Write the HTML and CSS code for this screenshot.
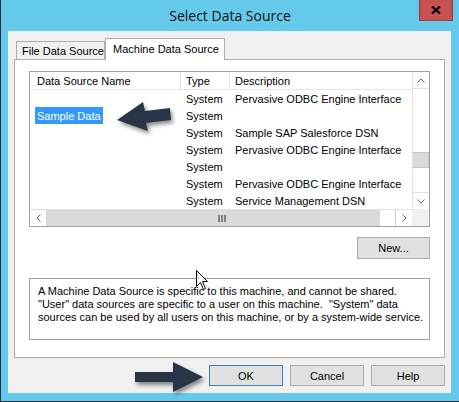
FILE: index.html
```html
<!DOCTYPE html>
<html lang="en">
<head>
    <meta charset="UTF-8">
    <title>Select Data Source</title>
    <link rel="stylesheet" href="styles.css">
</head>
<body>
    <div class="window">
        <div class="titlebar">
            <div></div>
            <div class="title">Select Data Source</div>
            <div class="close">
                <svg width="10" height="8" viewBox="0 0 10 8"><path d="M1 0.5 L9 7.5 M9 0.5 L1 7.5" stroke="#000" stroke-width="2.2" fill="none"/></svg>
            </div>
        </div>

        <div class="client">
            <div class="tabs">
                <div class="tab">File Data Source</div>
                <div class="tab active">Machine Data Source</div>
            </div>

            <div class="panel">
                <div class="listbox">
                    <div class="list-content">
                        <div class="row header">
                            <div class="cell name">Data Source Name</div>
                            <div class="cell">Type</div>
                            <div class="cell">Description</div>
                        </div>
                        <div class="row">
                            <div class="cell name"></div>
                            <div class="cell">System</div>
                            <div class="cell">Pervasive ODBC Engine Interface</div>
                        </div>
                        <div class="row">
                            <div class="cell name"><span class="selected">Sample Data</span></div>
                            <div class="cell">System</div>
                            <div class="cell"></div>
                        </div>
                        <div class="row">
                            <div class="cell name"></div>
                            <div class="cell">System</div>
                            <div class="cell">Sample SAP Salesforce DSN</div>
                        </div>
                        <div class="row">
                            <div class="cell name"></div>
                            <div class="cell">System</div>
                            <div class="cell">Pervasive ODBC Engine Interface</div>
                        </div>
                        <div class="row">
                            <div class="cell name"></div>
                            <div class="cell">System</div>
                            <div class="cell"></div>
                        </div>
                        <div class="row">
                            <div class="cell name"></div>
                            <div class="cell">System</div>
                            <div class="cell">Pervasive ODBC Engine Interface</div>
                        </div>
                        <div class="row">
                            <div class="cell name"></div>
                            <div class="cell">System</div>
                            <div class="cell">Service Management DSN</div>
                        </div>
                    </div>

                    <!-- vertical scrollbar -->
                    <div class="vscroll">
                        <div class="sb-btn up">
                            <svg width="8" height="5" viewBox="0 0 8 5"><path d="M0.5 4.5 L4 1 L7.5 4.5" stroke="#606060" fill="none"/></svg>
                        </div>
                        <div class="sb-track">
                            <div class="v-thumb"></div>
                        </div>
                        <div class="sb-btn down">
                            <svg width="8" height="5" viewBox="0 0 8 5"><path d="M0.5 0.5 L4 4 L7.5 0.5" stroke="#606060" fill="none"/></svg>
                        </div>
                    </div>

                    <!-- horizontal scrollbar -->
                    <div class="hscroll">
                        <div class="sb-btn left">
                            <svg width="5" height="8" viewBox="0 0 5 8"><path d="M4.5 0.5 L1 4 L4.5 7.5" stroke="#606060" fill="none"/></svg>
                        </div>
                        <div class="h-thumb">
                            <svg width="8" height="7" viewBox="0 0 8 7"><path d="M1 0 V7 M4 0 V7 M7 0 V7" stroke="#6a6a6a" stroke-width="1.6"/></svg>
                        </div>
                        <div class="sb-track"></div>
                        <div class="sb-btn right">
                            <svg width="5" height="8" viewBox="0 0 5 8"><path d="M0.5 0.5 L4 4 L0.5 7.5" stroke="#606060" fill="none"/></svg>
                        </div>
                    </div>
                    <div class="corner"></div>
                </div>

                <div class="new-row">
                    <button class="btn new">New...</button>
                </div>

                <div class="desc">A Machine Data Source is specific to this machine, and cannot be shared.
"User" data sources are specific to a user on this machine.  "System" data
sources can be used by all users on this machine, or by a system-wide service.</div>
            </div>

            <div class="buttons">
                <button class="btn default">OK</button>
                <button class="btn">Cancel</button>
                <button class="btn">Help</button>
            </div>
        </div>

        <!-- annotation arrows + mouse pointer drawn over the dialog -->
        <svg class="overlay" width="459" height="402" viewBox="0 0 459 402">
            <g class="arrows">
                <polygon points="117,120 143,102 145,111 170,108 171,120 146,123 148,131" />
                <polygon points="135,372 173,372 173,362 203,377 173,392 173,382 135,382" />
            </g>
            <path class="cursor" d="M196.5 270.5 V286.5 L200.5 282.5 L203.5 289.5 L205.5 288.5 L202.5 281.5 L207.5 281.5 Z" />
        </svg>
    </div>
</body>
</html>
```

FILE: styles.css
```css
body {
    margin: 0;
    font-family: "Liberation Sans", Arial, sans-serif;
    font-size: 11px;
    color: #000;
}
.window {
    position: relative;
    width: 458px;
    height: 401px;
    background-color: #64c9ea;
    border-left: 1px solid #233041;
    border-bottom: 1px solid #233041;
}
.titlebar {
    display: grid;
    grid-template-columns: 1fr auto 1fr;
    height: 31px;
}
.title {
    align-self: center;
    font-family: "Open Sans", sans-serif;
    font-size: 14px;
    color: #111;
    padding-bottom: 1px;
}
.close {
    justify-self: end;
    align-self: start;
    width: 32px;
    height: 20px;
    margin-right: 6px;
    background-color: #c75050;
    border: 1px solid #94403e;
    border-top: none;
    display: flex;
    align-items: center;
    justify-content: center;
}
.client {
    width: 431px;
    height: 348px;
    margin-left: 7px;
    padding: 7px 6px;
    background-color: #f0f0f0;
}
.tabs {
    display: flex;
    align-items: flex-end;
    height: 21px;
    padding-left: 2px;
}
.tab {
    box-sizing: border-box;
    width: 89px;
    height: 18px;
    padding: 3px 0 0 5px;
    line-height: 13px;
    border: 1px solid #adadad;
    border-bottom: none;
    background-color: #f0f0f0;
    white-space: nowrap;
}
.tab.active {
    position: relative;
    width: 120px;
    height: 22px;
    margin-bottom: -1px;
    padding: 4px 0 0 7px;
    background-color: #fff;
}
.panel {
    box-sizing: border-box;
    height: 299px;
    padding: 11px 14px 0 14px;
    background-color: #fff;
    border: 1px solid #adadad;
}
.listbox {
    box-sizing: border-box;
    height: 156px;
    display: grid;
    grid-template-columns: 1fr 17px;
    grid-template-rows: 137px 17px;
    border: 1px solid #a0a0a0;
}
.list-content {
    overflow: hidden;
}
.row {
    display: grid;
    grid-template-columns: 150px 49px 1fr;
    height: 17px;
    line-height: 18px;
    white-space: nowrap;
}
.cell {
    padding-left: 6px;
    overflow: hidden;
}
.cell.name {
    padding-left: 5px;
}
.header {
    height: 18px;
    line-height: 19px;
    border-bottom: 1px solid #e5e5e5;
    box-sizing: border-box;
}
.header .cell {
    border-left: 1px solid #e5e5e5;
    padding-left: 5px;
}
.header .cell.name {
    border-left: none;
    padding-left: 7px;
}
.selected {
    display: inline-block;
    height: 17px;
    padding: 0 2px;
    line-height: 18px;
    vertical-align: top;
    background-color: #3399ff;
    color: #fff;
}
.vscroll {
    display: flex;
    flex-direction: column;
    border-left: 1px solid #e0e0e0;
}
.sb-btn {
    display: flex;
    align-items: center;
    justify-content: center;
    background-color: #fff;
}
.vscroll .sb-btn {
    height: 16px;
}
.vscroll .up {
    border-bottom: 1px solid #e0e0e0;
}
.vscroll .down {
    border-top: 1px solid #e0e0e0;
}
.sb-track {
    flex: 1;
    background-color: #fff;
}
.v-thumb {
    height: 16px;
    margin-top: 63px;
    box-sizing: border-box;
    background-color: #dadada;
    border: 1px solid #c8c8c8;
    border-left: none;
}
.hscroll {
    display: flex;
    border-top: 1px solid #e0e0e0;
}
.hscroll .sb-btn {
    width: 16px;
}
.hscroll .left {
    border-right: 1px solid #d0d0d0;
}
.hscroll .right {
    border-left: 1px solid #d0d0d0;
}
.h-thumb {
    width: 333px;
    background-color: #dadada;
    display: flex;
    align-items: center;
    justify-content: center;
    padding-left: 16px;
    box-sizing: border-box;
}
.corner {
    background-color: #f0f0f0;
}
.new-row {
    display: flex;
    justify-content: flex-end;
    margin-top: 10px;
}
.btn {
    box-sizing: border-box;
    width: 74px;
    height: 21px;
    padding: 0;
    font-family: "Liberation Sans", Arial, sans-serif;
    font-size: 11px;
    color: #000;
    background-color: #e1e1e1;
    border: 1px solid #adadad;
}
.btn.new {
    width: 73px;
    height: 22px;
}
.btn.default {
    border-color: #3c7fb1;
}
.desc {
    box-sizing: border-box;
    height: 62px;
    margin-top: 19px;
    padding: 6px 0 0 8px;
    line-height: 13px;
    border: 1px solid #a0a0a0;
    white-space: pre;
}
.buttons {
    display: flex;
    justify-content: flex-end;
    gap: 7px;
    margin-top: 7px;
}
.overlay {
    position: absolute;
    top: 0;
    left: -1px;
    pointer-events: none;
}
.arrows {
    fill: #2a3447;
    filter: drop-shadow(2px 3px 2px rgba(0, 0, 0, 0.45));
}
.cursor {
    fill: #fff;
    stroke: #000;
    stroke-width: 1;
}
```
